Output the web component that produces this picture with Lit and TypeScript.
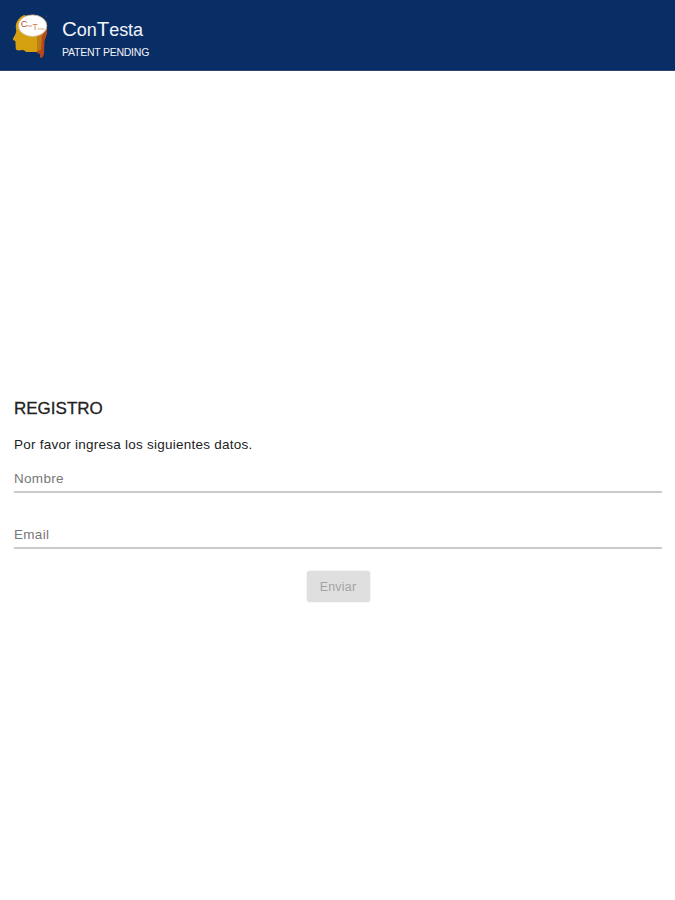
import { LitElement, html, css } from "lit";
import { customElement, property } from "lit/decorators.js";

@customElement("brand-logo")
class BrandLogo extends LitElement {
  static styles = css`
    :host { display: block; width: 38px; height: 48px; }
    svg { display: block; }
    text { font-family: "Liberation Sans", sans-serif; }
  `;
  render() {
    return html`
      <svg width="38" height="48" viewBox="0 0 38 48">
        <path d="M12 3 C6 6 3 11 4 17 C5 20 3 23 0.8 27 C1 28.5 3 28.5 3.4 29.2 L3.8 37 C5 39.5 9 37.8 11 38 Q13 38.5 14 40 L28 40 L28 8 Z" fill="#d5a010"/>
        <path d="M25 24 L35 14 Q35.5 22 33 27 Q31 30 31.5 35 L32 40 L25 40 Z" fill="#bd7c18"/>
        <path d="M30 24 L35 17 Q34.8 24 32.5 28 L32 42 L30 46 L28 45.5 L28 42 L25 41 L25 39 L29 38 Z" fill="#b8481c"/>
        <ellipse cx="20.6" cy="13.7" rx="14.2" ry="10.8" fill="#fff" stroke="#d5b795" stroke-width="0.8"/>
        <text x="8.8" y="14.6" font-size="9.5" fill="#c04f30">C</text>
        <text x="15.6" y="14.6" font-size="4" fill="#c9714e">on</text>
        <text x="20.4" y="17.6" font-size="8.5" fill="#d08345">T</text>
        <text x="25.8" y="17.6" font-size="3.6" fill="#c99466">esta</text>
        <circle cx="34.4" cy="4.2" r="0.7" fill="#6d4a4a"/>
      </svg>`;
  }
}

@customElement("form-field")
class FormField extends LitElement {
  @property() label = "";
  static styles = css`
    :host { display: block; height: 24px; border-bottom: 2px solid #cbcbcb; box-sizing: border-box; }
    .label { display: block; font-size: 13.5px; line-height: 20px; color: #777; letter-spacing: 0.3px; }
  `;
  render() {
    return html`<span class="label">${this.label}</span>`;
  }
}

@customElement("app-root")
class AppRoot extends LitElement {
  static styles = css`
    :host {
      display: flex; flex-direction: column; height: 900px; background: #fff;
      font-family: "Liberation Sans", Arial, sans-serif; color: #222;
    }
    header {
      display: flex; height: 71px; box-sizing: border-box; padding: 12px 0 0 12px; gap: 12px;
      background: #092d65; border-bottom: 1px solid #30406f; color: #f1f4fa;
    }
    .name { font-size: 18px; line-height: 24px; padding-top: 5px; letter-spacing: -0.05px; white-space: nowrap; }
    .cap { font-size: 20.5px; }
    .patent { font-size: 10.5px; line-height: 14px; margin-top: 3px; letter-spacing: -0.24px; white-space: nowrap; }
    main { display: flex; flex-direction: column; padding: 327px 13px 0 14px; }
    h1 { margin: 0; font-size: 17px; line-height: 22px; font-weight: 400; -webkit-text-stroke: 0.3px #222; }
    p { margin: 15px 0 14px; font-size: 13.5px; line-height: 20px; letter-spacing: 0.25px; }
    .second { margin-top: 32px; }
    button {
      align-self: center; margin-top: 22px; width: 63px; height: 31px; border: 0; padding: 0; border-radius: 3px;
      background: #dfdfdf; color: #a3a3a3; font: 12.5px "Liberation Sans", Arial, sans-serif;
      letter-spacing: 0.2px; box-shadow: 0 0 2px #ddd;
    }
  `;
  render() {
    return html`
      <header>
        <brand-logo></brand-logo>
        <div>
          <div class="name"><span class="cap">C</span>on<span class="cap">T</span>esta</div>
          <div class="patent">PATENT PENDING</div>
        </div>
      </header>
      <main>
        <h1>REGISTRO</h1>
        <p>Por favor ingresa los siguientes datos.</p>
        <form-field label="Nombre"></form-field>
        <form-field class="second" label="Email"></form-field>
        <button disabled>Enviar</button>
      </main>`;
  }
}
